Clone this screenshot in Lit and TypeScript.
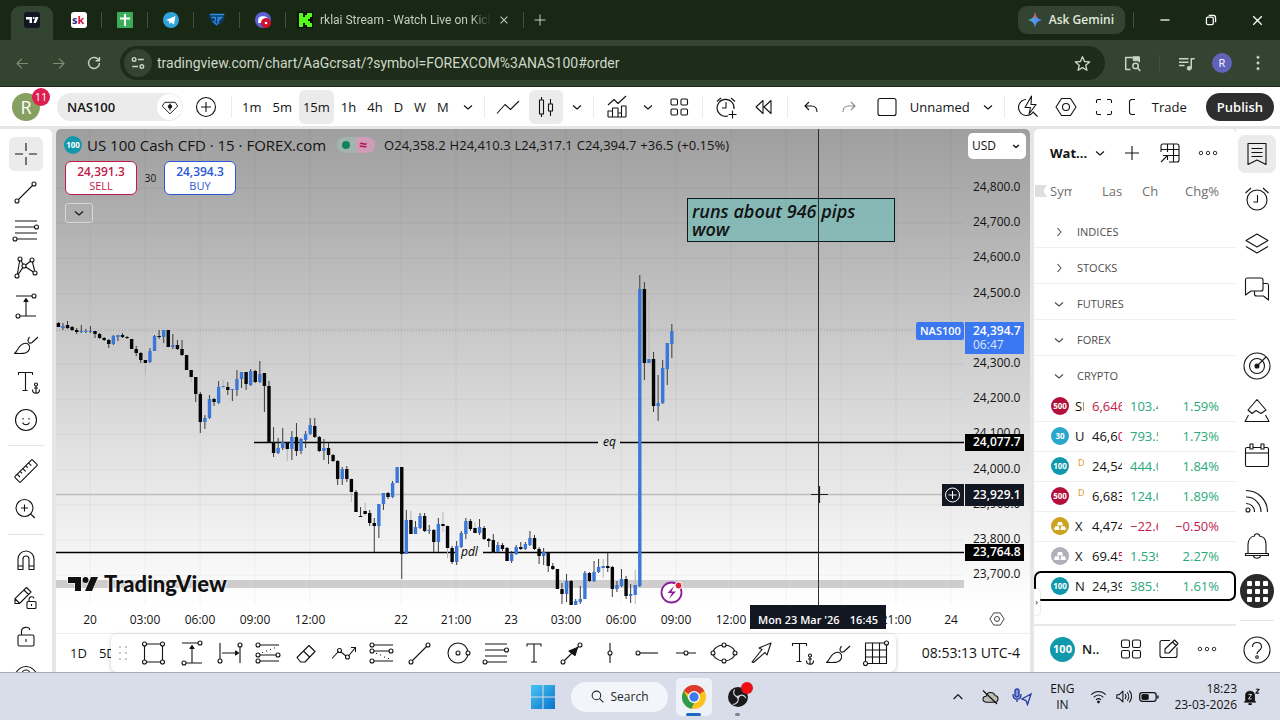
import { LitElement, html, svg, css } from "lit";
import { customElement } from "lit/decorators.js";
import { classMap } from "lit/directives/class-map.js";

/* Line icons, drawn on a 28 x 28 grid with a one-unit stroke. */
const anchor = svg`<circle cx="22" cy="17.500" r="1.500"/><path d="M22 19v7M20 21h4M18.500 22.500c0 5 7 5 7 0"/>`;
const ICONS: Record<string, unknown> = {
  cross: svg`<path d="M14 3v8M14 17v8M3 14h8M17 14h8"/>`,
  trend: svg`<circle cx="5" cy="23" r="2"/><circle cx="22" cy="6" r="2"/><path d="M6.500 21.500l14-14"/>`,
  fib: svg`<path d="M3 5h22M3 11h19.500M3 17h22M5 23h20"/><circle cx="24.500" cy="11" r="2"/><circle cx="3" cy="23" r="2"/>`,
  pattern: svg`<circle cx="8" cy="5" r="2"/><circle cx="20" cy="6" r="2"/><circle cx="5" cy="22" r="2"/><circle cx="23" cy="19" r="2"/><circle cx="12" cy="12" r="2"/><path d="M7.600 7L5.400 20M9 6.800l2.200 3.600M13.500 11l5-3.700M20.400 8l2.300 9M13.800 13l7.500 5M10.800 13.600L6.200 20.400"/>`,
  position: svg`<path d="M4 4h16M8 24h16M14 8v16"/><path d="M12 9.500l2-3 2 3z" fill="currentColor"/><circle cx="22" cy="4" r="2"/><circle cx="6" cy="24" r="2"/>`,
  range: svg`<path d="M4 4v16M24 8v16M6 14h15"/><path d="M19.500 12l3 2-3 2z" fill="currentColor"/><circle cx="4" cy="22" r="2"/><circle cx="24" cy="6" r="2"/>`,
  longpos: svg`<path d="M6 6h19M6 16h16M6 22h19"/><circle cx="4" cy="6" r="2"/><circle cx="4" cy="16" r="2"/><circle cx="24" cy="16" r="2"/><circle cx="4" cy="22" r="2"/><path d="M8 13.500h1M12 12h1M16 10.500h1M20 9h1"/>`,
  shortpos: svg`<path d="M6 6h19M6 12h15M6 22h19"/><circle cx="4" cy="6" r="2"/><circle cx="4" cy="12" r="2"/><circle cx="23" cy="12" r="2"/><circle cx="4" cy="22" r="2"/><path d="M8 14.500h1M12 16h1M16 18h1M20 19.500h1"/>`,
  brush: svg`<path d="M2.500 23.500c6-.5 13 1.500 15-4.500 1-4-2-6.500-5.500-5.500C6.500 15 6.500 20 2.500 23.500z"/><path d="M26 7l-6 5.500c-1.500 1.300-4 .5-4-2 0-1.500 1-2.500 1.500-3.500"/>`,
  textAnchor: svg`<path d="M6.500 7V4.500h14V7M13.500 4.500v18M10.500 22.500h5"/><g transform="translate(2 -1)">${anchor}</g>`,
  text: svg`<path d="M7 7.500V5h14v2.500M14 5v18M11 23h6"/>`,
  smile: svg`<circle cx="14" cy="14" r="10.500"/><path d="M11 12v1.500M17 12v1.500M10.500 16.500c1.500 3 5.500 3 7 0"/>`,
  ruler: svg`<g transform="rotate(-45 14 14)"><rect x="1.500" y="10" width="25" height="8" rx="1"/><path d="M5.500 10v4M9.500 10v3M13.500 10v4M17.500 10v3M21.500 10v4"/></g>`,
  zoom: svg`<circle cx="12.500" cy="13" r="8.500"/><path d="M12.500 9.500v7M9 13h7M18.800 19l4 4"/>`,
  magnet: svg`<path d="M6 23.500V13a8 8 0 0 1 16 0v10.500h-5V13a3 3 0 0 0-6 0v10.500zM6 20h5M17 20h5"/>`,
  pencilLock: svg`<path d="M3 19.500v-4.800L14.500 3.500l4.500 4.500L7.500 19.500zM12 6l4.500 4.500M3.300 15l4 4"/><rect x="15" y="17.500" width="9" height="7" rx="1"/><path d="M17 17.500v-2c0-3.500 4.500-3.500 5-1M19.500 20v2"/>`,
  lock: svg`<rect x="6" y="13" width="16" height="11" rx="1.500"/><path d="M9.500 13V9.500c0-5 7.500-5.500 8.500-1.500M14 17v3"/>`,
  eye: svg`<path d="M3 14c6-10 16-10 22 0-6 10-16 10-22 0z"/><circle cx="14" cy="14" r="4"/>`,
  plusCircle: svg`<circle cx="14" cy="14" r="9.500"/><path d="M14 9v10M9 14h10"/>`,
  plus: svg`<path d="M14 7v14M7 14h14"/>`,
  chevron: svg`<path d="M10 12.500l4 3.500 4-3.500"/>`,
  right: svg`<path d="M12.500 10l3.500 4-3.500 4"/>`,
  up: svg`<path d="M8.500 16.500l5.500-5.500 5.500 5.500" stroke-width="1.600"/>`,
  line: svg`<path d="M3 20.500l8-9 5.500 5L25 8"/>`,
  candles: svg`<rect x="7.500" y="7" width="4" height="14"/><path d="M9.500 4v3M9.500 21v3M18.500 6v5M18.500 18v5"/><rect x="16.500" y="11" width="4" height="7"/>`,
  indicators: svg`<path d="M5 12l6-5.500 4 4 8-7.500M5 24v-6h4.500v6M9.500 24v-9H15v9M15 24v-4h3.500v4M18.500 24V13H23v11M5 24h18"/>`,
  layouts: svg`<rect x="6" y="6" width="6.500" height="6" rx="1.200"/><rect x="16" y="6" width="6.500" height="6" rx="1.200"/><rect x="6" y="16" width="6.500" height="6" rx="1.200"/><rect x="16" y="16" width="6.500" height="6" rx="1.200"/>`,
  panels: svg`<rect x="4.500" y="5" width="8" height="7.500" rx="1.800"/><rect x="15.500" y="5" width="8" height="7.500" rx="1.800"/><rect x="4.500" y="15.500" width="8" height="7.500" rx="1.800"/><rect x="15.500" y="15.500" width="8" height="7.500" rx="1.800"/>`,
  alarmPlus: svg`<path d="M22 16a8.500 8.500 0 1 0-6 7M14 9v6h-4M5 8.500L9 5M19 5l4 3.500M20.500 17.500v8M16.500 21.500h8"/>`,
  rewind: svg`<path d="M13 7.500v13L6 14zM21 7.500v13L14 14z"/>`,
  undo: svg`<path d="M12 9l-4 4 4 4M8 13h6.500c3.500 0 5.500 2.500 5.500 6"/>`,
  redo: svg`<path d="M16 9l4 4-4 4M20 13h-6.500C10 13 8 15.500 8 19"/>`,
  square: svg`<rect x="5" y="5.500" width="18" height="17" rx="2"/>`,
  flash: svg`<path d="M12 6.500a8 8 0 1 0 7.500 12M19.500 19.500l4 4M17.500 3L11 14.500h5.500L15 21l7-9.500h-5z"/>`,
  hex: svg`<path d="M9.500 5.500h9L24 14l-5.500 8.500h-9L4 14z"/><circle cx="14" cy="14" r="3.500"/>`,
  full: svg`<path d="M6.500 10V8c0-1 .5-1.500 1.500-1.500h3M17 6.500h3c1 0 1.500.5 1.500 1.500v2M21.500 18v2c0 1-.5 1.500-1.500 1.500h-3M11 21.500H8c-1 0-1.500-.5-1.500-1.500v-2"/>`,
  bracket: svg`<path d="M10 6.500H7c-1.500 0-2.500 1-2.500 2.500v10c0 1.500 1 2.500 2.500 2.500h3"/>`,
  gem: svg`<path d="M8 8.500h12l3 4.500-9 9-9-9z"/><path d="M14 10v8" /><circle cx="14" cy="13.500" r="2" fill="currentColor"/>`,
  eraser: svg`<path d="M5 18.500L17 6.500l6 6L13 23H8.500zM11.500 12l6 6"/>`,
  wave: svg`<path d="M2 19.500l6.500-7M11 13l5 4M18.500 17l6.500-8M21 8.500h4.500V13"/><circle cx="9.500" cy="11.500" r="2"/><circle cx="17.500" cy="18" r="2"/>`,
  circle: svg`<circle cx="14" cy="14" r="10"/><circle cx="14" cy="14" r="2"/><circle cx="24" cy="14" r="2" fill="#fff"/>`,
  arrowLine: svg`<circle cx="5" cy="23" r="2"/><circle cx="22" cy="6" r="2"/><path d="M6.500 21.500l14-14"/><path d="M19.500 8.500l-2.500 8-6-4.500z" fill="currentColor"/>`,
  vline: svg`<path d="M14 4v8M14 16v8"/><circle cx="14" cy="14" r="2"/>`,
  hray: svg`<path d="M6 14h18"/><circle cx="4" cy="14" r="2"/>`,
  hline: svg`<path d="M4 14h8M16 14h8"/><circle cx="14" cy="14" r="2"/>`,
  ellipse: svg`<ellipse cx="14" cy="14" rx="11" ry="8"/><circle cx="3" cy="14" r="2" fill="#fff"/><circle cx="25" cy="14" r="2" fill="#fff"/><circle cx="14" cy="6" r="2" fill="#fff"/><circle cx="14" cy="22" r="2" fill="#fff"/>`,
  arrow: svg`<path d="M4 23l10-12.500-3-1.500L23 4l-4 12-2-2.500L5.500 23.500z"/>`,
  grid: svg`<rect x="3.500" y="4" width="21" height="20.500"/><path d="M10.500 4v20.500M17.500 4v20.500M3.500 11h21M3.500 18h21"/><circle cx="24.500" cy="4" r="2" fill="#fff"/><circle cx="3.500" cy="24.500" r="2" fill="#fff"/>`,
  rect: svg`<rect x="4.500" y="5" width="18" height="18"/><circle cx="4.500" cy="5" r="2" fill="#fff"/><circle cx="22.500" cy="5" r="2" fill="#fff"/><circle cx="4.500" cy="23" r="2" fill="#fff"/><circle cx="22.500" cy="23" r="2" fill="#fff"/>`,
  table: svg`<path d="M5 13V7c0-1.500.5-2 2-2h14c1.500 0 2 .5 2 2v14c0 1.500-.5 2-2 2h-8M5 10.500h18M12 16.500h11M11.500 5v8M17.500 5v18M5 23l6.500-6.500M7 16.500h4.500V21"/>`,
  dots: svg`<circle cx="5" cy="14" r="2.200"/><circle cx="14" cy="14" r="2.200"/><circle cx="23" cy="14" r="2.200"/>`,
  list: svg`<path d="M5 3.500h18v21l-9-4.500-9 4.500zM8.500 8.500h11M8.500 12.500h11M8.500 16.500h11"/>`,
  alarm: svg`<circle cx="14" cy="15" r="10"/><path d="M14.500 10v7h-4M2.500 8L8 3M20 3l5.500 5"/>`,
  layers: svg`<path d="M14 4l11 6.500L14 17 3 10.500zM3 16.500L14 23l11-6.500"/>`,
  chat: svg`<path d="M4 3h14c1.500 0 2 .5 2 2v9c0 1.500-.5 2-2 2H8l-5.500 4V5c0-1.500.5-2 1.500-2zM20 8.500h4c1.200 0 1.500.5 1.500 2v14.500l-5-4h-7c-1.500 0-2-.5-2-2V16"/>`,
  target: svg`<circle cx="14" cy="14" r="13"/><circle cx="14" cy="14" r="7.500"/><circle cx="14" cy="14" r="2" fill="currentColor"/><path d="M15 13l8-8"/>`,
  peaks: svg`<path d="M14 2.500l9 10.500-5 3.500-5-3-4 3L5 13zM5.500 18L2 24.500h24L22.500 18"/>`,
  calendar: svg`<rect x="2.500" y="5.500" width="23" height="19" rx="1.500"/><path d="M2.500 11h23"/><rect x="7" y="2" width="3" height="5" fill="#fff"/><rect x="18" y="2" width="3" height="5" fill="#fff"/>`,
  feed: svg`<circle cx="5" cy="23" r="2"/><path d="M3 16.500c5 0 8.500 3.500 8.500 8.500M3 10c8.500 0 15 6.500 15 15M3 3.500c12 0 21.500 9.500 21.500 21.500"/>`,
  bell: svg`<path d="M5 21.500v-9c0-5 3-8 6.500-8.500 0-3 5-3 5 0 4 .5 6.500 3.500 6.500 8.500v9M2.500 21.500h23v2h-23zM10.500 24c.5 3 6.500 3 7 0"/>`,
  help: svg`<circle cx="14" cy="14" r="13"/><path d="M9.500 11c0-6 9-6 9 0 0 3.500-4.500 3.500-4.500 7"/><circle cx="14" cy="21" r="1.300"/>`,
  edit: svg`<path d="M15 5.500H7C5.500 5.500 5 6 5 7.500v13c0 1.500.5 2 2 2h13c1.500 0 2-.5 2-2v-8M10 18v-4L19.500 5l3.500 3.500-9 9.500zM17.500 7l3.500 3.500"/>`,
  back: svg`<path d="M23 14H6M13 6l-8 8 8 8" stroke-width="2"/>`,
  forward: svg`<path d="M5 14h17M15 6l8 8-8 8" stroke-width="2"/>`,
  reload: svg`<path d="M22.500 14a8.500 8.500 0 1 1-3-6.500l3 3M22.500 4.500v6h-6" stroke-width="2.200"/>`,
  tune: svg`<g stroke-width="2.200"><circle cx="8" cy="8.500" r="2.800"/><path d="M14 8.500h9M5 19.500h9"/><circle cx="20" cy="19.500" r="2.800"/></g>`,
  star: svg`<path d="M14 4l3 7 7.500.7-5.700 5 1.700 7.300-6.500-4-6.500 4 1.700-7.300-5.700-5L11 11z" stroke-width="2"/>`,
  sidesearch: svg`<path d="M11 23H4V5h20v7" stroke-width="2.200"/><path d="M15 4h9v6h-9z" fill="currentColor"/><circle cx="18.500" cy="17.500" r="4" stroke-width="2.200"/><path d="M21.500 20.500l4 4.500" stroke-width="2.200"/>`,
  queue: svg`<path d="M3 7h14M3 12h14M3 17h8M21 21V7h5" stroke-width="2.200"/><circle cx="18" cy="21" r="3" fill="currentColor"/>`,
  kebab: svg`<g fill="currentColor"><circle cx="14" cy="6" r="1.600"/><circle cx="14" cy="14" r="1.600"/><circle cx="14" cy="22" r="1.600"/></g>`,
  min: svg`<path d="M6 14h16" stroke-width="2.200"/>`,
  restore: svg`<g stroke-width="2.200"><rect x="6" y="9" width="12" height="13" rx="2.500"/><path d="M10 6h8c3 0 4 1.500 4 4v8"/></g>`,
  close: svg`<path d="M6 6l16 16M22 6L6 22" stroke-width="2.400"/>`,
  search: svg`<circle cx="12" cy="12" r="8" stroke-width="2"/><path d="M18 18l7 7" stroke-width="2"/>`,
  cloudOff: svg`<path d="M8 22c-7-1-6-9 0-9 1-8 12-8 14-1 6 0 6 9 0 10z" fill="#bdbdb5" stroke-width="1.600"/><path d="M3 4l22 21" stroke-width="2"/>`,
  wifi: svg`<g stroke-width="1.800"><path d="M2 11c7-7 17-7 24 0M6 15.500c5-5 11-5 16 0M10 19.500c2.500-2.500 5.500-2.500 8 0"/></g><circle cx="14" cy="23" r="1.800" fill="currentColor"/>`,
  volume: svg`<g stroke-width="1.800"><path d="M3 11h4l6-6v18l-6-6H3zM16.500 10c2 2.500 2 5.500 0 8M20 7c3.500 4 3.500 10 0 14M23.500 4.500c5 5.500 5 13.500 0 19"/></g>`,
  battery: svg`<rect x="1" y="8" width="23" height="12" rx="3.500" stroke-width="1.800"/><rect x="4" y="10.500" width="9" height="7" rx="1" fill="currentColor"/><path d="M26.500 12v4" stroke-width="2"/>`,
  notify: svg`<path d="M4 20V11c0-4 3-6 7-6s7 2 7 6v9l2 2H2z" fill="currentColor"/><path d="M8.500 25h5" stroke-width="3"/><path d="M8.500 10h5l-5 7h5" stroke="#d9dde9" stroke-width="1.500"/><path d="M20 2h5l-5 6h5" stroke-width="1.800"/>`,
};

const icon = (name: string, size = 28) => html`<svg
  class="icon" width=${size} height=${size} viewBox="0 0 28 28" fill="none"
  stroke="currentColor" stroke-width="1.100" stroke-linejoin="round" aria-hidden="true">${ICONS[name]}</svg>`;

const iconButton = (name: string, label: string, cls = "ib", size = 28) =>
  html`<button class=${cls} aria-label=${label}>${icon(name, size)}</button>`;

const base = css`
  :host, *, *::before, *::after { box-sizing: border-box; }
  :host { font-family: "Open Sans", "Noto Sans", sans-serif; font-size: 13px; line-height: 18px; color: #131313; }
  button, input, select { font: inherit; color: inherit; border: 0; padding: 0; margin: 0; background: none; }
  button { display: inline-flex; align-items: center; justify-content: center; flex: none; white-space: nowrap; }
  .icon { display: block; flex: none; }
`;

/* ------------------------------------------------------------ browser */

const favicons = [
  svg`<rect width="16" height="16" rx="3" fill="#131722"/><path d="M2 5h6v6H5.500V7.500H2zM11.500 5H14.500L12 11H9.500z" fill="#fff"/><circle cx="9.700" cy="6" r="1" fill="#fff"/>`,
  svg`<rect width="16" height="16" rx="3" fill="#fff"/><text x="1" y="12" font-size="11" font-weight="700" fill="#2b2d8c">s<tspan fill="#d6123c">k</tspan></text>`,
  svg`<rect width="16" height="16" rx="1" fill="#3cab5a"/><path d="M8 2v12M3 6.500h10" stroke="#fff" stroke-width="2"/>`,
  svg`<circle cx="8" cy="8" r="8" fill="#2fa3db"/><path d="M3 8l9.500-4-1.500 8.500-3-2-1.500 1.500-.5-3z" fill="#fff"/>`,
  svg`<path d="M0 2h16c0 5-3 10-8 12C3 12 0 8 0 2z" fill="#0d3a68"/><path d="M1 2.500h14M2.500 5.500h4v4M9 12V5.500h3.500L9 9M4 9l4 4" stroke="#2f8fe0" stroke-width="1.300" fill="none"/>`,
  svg`<circle cx="8" cy="8" r="8" fill="#5b62d6"/><path d="M3.500 6c2-2.500 7-2.500 9 0l1 5H3z" fill="#fff"/><circle cx="11" cy="11" r="5" fill="#d0102b"/><circle cx="11" cy="11" r="1.300" fill="#fff"/>`,
];

@customElement("browser-chrome")
class BrowserChrome extends LitElement {
  static styles = [base, css`
    :host { display: block; color: #dfe8da; background: #192814; }
    .tabs { display: flex; align-items: center; height: 40px; padding-left: 11px; }
    .tab { width: 45px; height: 40px; }
    .tab.active { align-self: flex-end; height: 34px; width: 42px; margin-right: 3px; padding-bottom: 6px; background: #334430; border-radius: 9px 9px 0 0; }
    .tab .icon { width: 16px; height: 16px; }
    .sep { width: 1px; height: 16px; background: #40523b; flex: none; }
    .tab.live { width: 237px; gap: 7px; justify-content: flex-start; padding: 0 13px 0 11px; color: #c3cfbd; font-family: Roboto, "Open Sans", sans-serif; font-size: 12px; }
    .tab.live .x .icon { width: 12px; height: 12px; }
    .label { flex: 1; overflow: hidden; text-align: left; mask-image: linear-gradient(90deg, #000 88%, transparent); }
    .new { width: 32px; }
    .gemini { margin-left: auto; height: 28px; padding: 0 11px 0 9px; gap: 6px; border-radius: 9px; background: #334430; font-weight: 600; font-size: 12px; color: #e2e9de; }
    .win { width: 46px; height: 40px; color: #fff; }
    .bar { display: flex; align-items: center; height: 47px; padding: 0 4px 0 4px; background: #334430; border-bottom: 1px solid #1c2a18; color: #c9d6c3; }
    .nav { width: 36px; height: 32px; }
    .nav.dim { color: #7b8c74; }
    .omni { flex: 1; display: flex; align-items: center; height: 34px; margin: 0 9px 0 8px; border-radius: 17px; background: #1e2c1a; }
    .tune { width: 28px; height: 28px; margin-left: 4px; border-radius: 50%; background: #334430; }
    .url { flex: 1; min-width: 0; margin-left: 5px; font-family: Roboto, "Open Sans", sans-serif; font-size: 14px; color: #cdd8c8; outline: 0; }
    .star { width: 28px; height: 28px; margin-right: 9px; }
    .tool { width: 36px; height: 32px; }
    .first { margin-right: 9px; }
    .second { margin-left: 8px; }
    .who { width: 20px; height: 20px; margin: 0 8px; border-radius: 50%; background: #6163bb; color: #fff; font-size: 11px; }
    .gap { margin: 0 8px; }
  `];
  render() {
    const names = ["TradingView", "SK", "Sheets", "Telegram", "Prop", "Discord"];
    return html`
      <div class="tabs">
        ${favicons.map((f, i) => html`
          <button class=${classMap({ tab: true, active: i === 0 })} aria-label=${names[i]}>
            <svg class="icon" viewBox="0 0 16 16">${f}</svg></button>
          ${i ? html`<span class="sep"></span>` : ""}`)}
        <button class="tab live">
          <svg class="icon" viewBox="0 0 16 16"><rect width="16" height="16" fill="#0b0f0a"/><path d="M2 1h4v4h2V3h2V1h5v4h-2v2h-2v2h2v2h2v4h-5v-2H8v-2H6v4H2z" fill="#53fc18"/></svg>
          <span class="label">rklai Stream - Watch Live on Kick</span><span class="x">${icon("close", 12)}</span>
        </button>
        <span class="sep"></span>
        ${iconButton("plus", "New tab", "new", 22)}
        <button class="gemini"><svg class="icon" width="16" height="16" viewBox="0 0 16 16">
          <defs><linearGradient id="gem" x1="0" y1="0" x2="1" y2="0"><stop stop-color="#4fc26a"/><stop offset=".35" stop-color="#4fa0e8"/><stop offset="1" stop-color="#4b7cf0"/></linearGradient></defs>
          <path d="M8 0c.6 5 3 7.400 8 8-5 .6-7.400 3-8 8-.6-5-3-7.400-8-8 5-.6 7.400-3 8-8z" fill="url(#gem)"/><path d="M8 0c.3 2.500 1 4.300 2.200 5.500H5.800C7 4.300 7.700 2.500 8 0z" fill="#e2574c"/></svg>Ask Gemini</button>
        <span class="sep gap"></span>
        ${iconButton("min", "Minimise", "win", 16)}${iconButton("restore", "Restore", "win", 16)}${iconButton("close", "Close", "win", 15)}
      </div>
      <div class="bar">
        ${iconButton("back", "Back", "nav dim", 17)}${iconButton("forward", "Forward", "nav dim", 17)}${iconButton("reload", "Reload", "nav", 18)}
        <div class="omni">
          ${iconButton("tune", "Site information", "tune", 18)}
          <input class="url" aria-label="Address" value="tradingview.com/chart/AaGcrsat/?symbol=FOREXCOM%3ANAS100#order">
          ${iconButton("star", "Bookmark", "star", 19)}
        </div>
        ${iconButton("sidesearch", "Search tabs", "tool first", 19)}
        <span class="sep"></span>
        ${iconButton("queue", "Media", "tool second", 19)}
        <button class="who" aria-label="Profile">R</button>
        ${iconButton("kebab", "Menu", "tool", 20)}
      </div>`;
  }
}

/* ------------------------------------------------------------ toolbars */

@customElement("top-toolbar")
class TopToolbar extends LitElement {
  static styles = [base, css`
    :host { display: flex; align-items: center; gap: 4px; height: 39px; padding: 0 6px 0 12px; background: #fff; overflow: hidden; }
    .avatar { position: relative; width: 28px; height: 28px; margin-right: 13px; border-radius: 50%; background: #86a061; color: #fff; font-size: 18px; }
    .badge { position: absolute; left: 20px; top: -5px; width: 18px; height: 18px; border-radius: 50%; background: #dc1e50; font-size: 11px; line-height: 18px; }
    .symbol { width: 126px; height: 28px; padding: 0 1px 0 10px; justify-content: space-between; border-radius: 14px; background: #ebebeb; font-weight: 600; }
    .gem { display: flex; align-items: center; justify-content: center; width: 25px; height: 26px; border-radius: 13px; background: #fff; }
    .add { width: 38px; height: 34px; }
    .sep { width: 1px; height: 22px; margin: 0 2px; background: #ebebeb; flex: none; }
    .times { display: flex; gap: 3px; margin-right: 1px; }
    .time { height: 34px; padding: 0 4px; border-radius: 6px; }
    .on { background: #ebebeb; border-radius: 6px; }
    .ib { width: 34px; height: 34px; }
    .cv { width: 20px; height: 34px; }
    .dim { color: #8a8a8a; }
    .cut { width: 11px; overflow: hidden; justify-content: flex-start; }
    .name { padding: 0 4px 0 2px; }
    .trade { height: 28px; padding: 0 11px; border-radius: 14px; font-weight: 500; margin-left: auto; }
    .publish { height: 28px; padding: 0 11px; border-radius: 14px; background: #2e2e2e; color: #fff; font-weight: 600; margin-left: 4px; }
  `];
  render() {
    const sep = html`<span class="sep"></span>`;
    const cv = (l: string) => iconButton("chevron", l, "cv", 28);
    return html`
      <button class="avatar" aria-label="Account">R<span class="badge">11</span></button>
      <button class="symbol">NAS100<span class="gem">${icon("gem", 24)}</span></button>
      ${iconButton("plusCircle", "Compare", "add")}${sep}
      <div class="times">${["1m", "5m", "15m", "1h", "4h", "D", "W", "M"].map((t) =>
        html`<button class=${classMap({ time: true, on: t === "15m" })}>${t}</button>`)}</div>
      ${cv("Intervals")}${sep}
      ${iconButton("line", "Line")}${iconButton("candles", "Candles", "ib on")}${cv("Chart types")}${sep}
      ${iconButton("indicators", "Indicators")}${cv("Favourite indicators")}${iconButton("layouts", "Templates")}${sep}
      ${iconButton("alarmPlus", "Create alert")}${iconButton("rewind", "Replay")}${sep}
      ${iconButton("undo", "Undo")}${iconButton("redo", "Redo", "ib dim")}${iconButton("square", "Layout")}
      <button class="name">Unnamed</button>${cv("Manage layouts")}${sep}
      ${iconButton("flash", "Quick search")}${iconButton("hex", "Settings")}${iconButton("full", "Fullscreen")}
      ${iconButton("bracket", "Snapshot", "cut")}
      <button class="trade">Trade</button><button class="publish">Publish</button>`;
  }
}

@customElement("draw-toolbar")
class DrawToolbar extends LitElement {
  static styles = [base, css`
    :host { display: flex; flex-direction: column; align-items: center; gap: 4px; width: 52px; padding-top: 8px; background: #fff; border-radius: 0 5px 0 0; overflow: hidden; }
    .ib { width: 34px; height: 34px; }
    .on { background: #ebebeb; border-radius: 6px; }
    .sep { width: 36px; height: 1px; margin: 4px 0; background: #e4e4e4; flex: none; }
  `];
  render() {
    return ["cross", "trend", "fib", "pattern", "position", "brush", "textAnchor", "smile", "-", "ruler", "zoom", "-", "magnet", "pencilLock", "lock", "eye"]
      .map((n) => n === "-" ? html`<span class="sep"></span>` : iconButton(n, n, n === "cross" ? "ib on" : "ib"));
  }
}

@customElement("side-rail")
class SideRail extends LitElement {
  static styles = [base, css`
    :host { display: flex; flex-direction: column; align-items: center; gap: 7px; width: 44px; padding: 6px 2px 4px 0; background: #fff; overflow: hidden; }
    .ib { width: 38px; height: 38px; }
    .on { background: #ebebeb; border-radius: 7px; }
    .space { margin-top: 32px; }
    .apps { width: 38px; height: 38px; }
    .disc { display: grid; grid-template-columns: repeat(3, 5px); gap: 3px; place-content: center; width: 34px; height: 34px; border-radius: 50%; background: #2a2a2a; }
    .cell { height: 5px; border-radius: 1px; background: #fff; }
    .help { margin-top: auto; padding-top: 10px; border-top: 1px solid #e4e4e4; height: 48px; width: 34px; }
  `];
  render() {
    return html`
      ${iconButton("list", "Watchlist", "ib on")}${iconButton("alarm", "Alerts")}${iconButton("layers", "Object tree")}${iconButton("chat", "Chats")}
      ${iconButton("target", "Screeners", "ib space")}${iconButton("peaks", "Pine")}${iconButton("calendar", "Calendar")}${iconButton("feed", "News")}${iconButton("bell", "Notifications")}
      <button class="apps" aria-label="Products"><span class="disc">${Array.from({ length: 9 }, () => html`<span class="cell"></span>`)}</span></button>
      ${iconButton("help", "Help", "help")}`;
  }
}

/* ------------------------------------------------------------ chart */

/* high, body top, body bottom, low, direction (1 = up), one entry per bar */
const BARS: number[][] = [
  [193,194,198,198,0],[194,197,199,201,1],[192,196,199,200,0],[197,198,201,202,0],[199,201,203,205,0],[196,202,203,204,1],[200,202,203,204,1],[197,202,203,204,1],
  [202,202,205,209,0],[204,205,209,210,0],[208,209,211,212,0],[210,211,215,219,0],[206,207,215,216,1],[206,206,208,212,1],[204,206,208,209,0],[207,208,209,210,0],
  [210,210,220,220,0],[217,220,224,227,0],[223,224,231,234,0],[230,231,234,246,0],[219,222,233,234,1],[206,207,222,222,1],[201,207,208,210,0],[201,201,208,214,1],
  [201,201,218,218,0],[205,216,218,220,1],[211,216,220,221,0],[211,220,226,227,0],[226,226,241,241,0],[241,241,248,253,0],[248,248,265,273,0],[263,265,293,304,0],
  [286,289,293,300,1],[266,270,289,290,1],[269,270,273,277,0],[252,258,274,275,1],[251,257,258,260,1],[253,258,261,266,0],[260,260,261,272,1],[241,250,261,267,1],
  [243,243,250,259,1],[243,243,255,261,0],[240,242,256,257,1],[241,242,253,254,0],[232,245,253,254,1],[244,244,257,283,0],[252,257,314,314,0],[298,314,324,328,0],
  [309,319,324,325,1],[299,313,319,321,1],[312,313,320,332,0],[302,308,320,331,1],[294,308,322,327,0],[309,310,322,325,1],[302,305,311,319,1],[289,296,305,306,1],
  [289,297,308,309,0],[307,308,322,323,0],[310,319,322,331,1],[314,319,326,335,0],[325,326,332,333,0],[331,332,350,356,0],[338,340,350,356,1],[337,340,350,353,0],
  [349,350,363,373,0],[361,363,383,383,0],[378,387,388,388,0],[374,382,385,387,0],[381,384,394,397,0],[389,394,397,423,0],[375,375,397,409,1],[364,364,375,381,1],
  [363,364,368,370,0],[352,354,368,369,1],[338,338,354,354,1],[338,338,425,450,0],[381,391,425,425,1],[382,391,405,405,0],[392,398,405,405,1],[384,387,399,400,1],
  [384,387,402,403,0],[396,401,402,405,1],[400,401,413,423,0],[389,395,413,423,1],[383,395,397,403,0],[396,397,419,429,0],[417,419,433,435,0],[412,417,433,436,1],
  [402,404,418,419,1],[389,392,405,410,1],[390,392,400,402,0],[393,399,404,404,0],[390,398,404,406,1],[397,399,410,411,0],[409,410,412,418,0],[405,411,423,424,0],
  [413,416,423,424,1],[414,416,420,422,0],[418,419,432,432,0],[422,425,432,434,1],[416,418,425,426,1],[413,418,420,421,0],[413,415,420,421,1],[402,409,416,417,1],
  [406,409,420,421,0],[418,420,427,435,0],[419,423,427,436,1],[423,423,437,443,0],[434,437,440,441,0],[440,440,460,460,0],[454,460,465,475,0],[445,452,465,473,1],
  [451,452,476,476,0],[470,472,476,476,1],[457,470,473,475,1],[442,444,470,470,1],[443,444,452,453,0],[432,443,452,453,1],[430,438,443,444,1],[430,437,439,449,1],
  [424,437,439,443,0],[437,438,460,468,0],[452,456,460,463,1],[440,450,457,458,1],[447,450,467,470,0],[455,465,467,474,1],[441,456,466,475,1],[146,160,457,458,1],
  [153,160,234,251,0],[170,230,234,234,1],[223,230,277,283,0],[246,274,277,292,1],[231,239,274,275,1],[214,214,240,256,1],[195,202,215,229,1],
];
const STEP = 4.578;
const barX = (i: number) => 2.4 + i * STEP;
/* Wicks that the chart paints as a pale grey line. */
const PALE = new Set([19, 29, 36, 50, 64, 67, 77, 84, 85, 91, 119, 126, 129]);
const PRICES = Array.from({ length: 12 }, (_, i) => 24800 - i * 100);
const priceY = (p: number) => 59 + (24800 - p) * 0.352;
const TIMES: [number, string][] = [[34, "20"], [89, "03:00"], [144, "06:00"], [199, "09:00"], [254, "12:00"], [345, "22"], [400, "21:00"], [455, "23"],
  [510, "03:00"], [565, "06:00"], [620, "09:00"], [675, "12:00"], [730, ""], [785, ""], [840, "21:00"], [895, "24"]];
const money = (p: number) => p.toLocaleString("en-US", { minimumFractionDigits: 1 });

@customElement("price-chart")
class PriceChart extends LitElement {
  static styles = [base, css`
    :host { display: flex; flex-direction: column; min-width: 0; background: #fff; border-radius: 5px 5px 0 0; overflow: hidden; }
    .stage { position: relative; flex: 1; min-height: 0; display: flex; background: linear-gradient(#9f9f9f 0, #b0b0b0 90px, #d2d2d2 246px, #f2f2f2 410px, #fff 477px); }
    .plot { flex: 1; min-width: 0; height: 100%; display: block; }
    .axis { width: 66px; height: 100%; display: block; flex: none; overflow: visible; }
    .up { fill: #3b77d8; } .down { fill: #060606; }
    .wick { stroke: #3a3a3a; stroke-width: 1; }
    .pale { stroke: #b4b4b4; }
    .grid { stroke: #000; stroke-opacity: .04; }
    .num { font-size: 12px; fill: #131313; }
    .strong { font-weight: 600; fill: #fff; }
    .tag { font-size: 11px; }
    .count { fill: #dbe6fd; }
    .mark { font-size: 12px; font-style: italic; fill: #000; font-weight: 500; }
    .legend { position: absolute; left: 8px; top: 5px; display: flex; flex-direction: column; align-items: flex-start; }
    .row { display: flex; align-items: center; height: 22px; }
    .coin { display: inline-flex; align-items: center; justify-content: center; width: 18px; height: 18px; border-radius: 50%; background: #1298ab; color: #fff; font-size: 8px; font-weight: 700; }
    .title { margin: 0 11px 0 5px; font-size: 15px; font-weight: 400; }
    .state { display: flex; align-items: center; width: 38px; height: 16px; margin-right: 9px; border-radius: 8px; background: linear-gradient(90deg, #a0b5ab 50%, #cf9db5 50%); }
    .live { width: 8px; height: 8px; margin-left: 5px; border-radius: 50%; background: #12835c; }
    .approx { margin-left: 9px; color: #b5125e; font-weight: 700; font-size: 14px; line-height: 14px; }
    .ohlc { display: flex; gap: 4px; }
    .deal { display: flex; align-items: center; margin-top: 5px; padding: 0 4px 0 1px; }
    .order { flex-direction: column; width: 72px; height: 34px; border: 1px solid; border-radius: 6px; background: #fff; font-size: 11px; line-height: 13px; }
    .order b { font-size: 12px; font-weight: 600; line-height: 15px; }
    .sell { color: #c01a48; } .buy { color: #2b56d6; }
    .spread { width: 27px; text-align: center; font-size: 10px; }
    .fold { width: 28px; height: 20px; margin: 8px 0 0 1px; border: 1px solid #d8d8d8; border-radius: 3px; }
    .currency { position: absolute; right: 4px; top: 4px; display: flex; align-items: center; height: 26px; width: 58px; border-radius: 5px; background: #fff; }
    .currency select { appearance: none; flex: 1; width: 58px; padding-left: 4px; font-size: 12px; outline: 0; }
    .currency .icon { margin-left: -18px; stroke-width: 2; pointer-events: none; }
    .note { position: absolute; left: 631px; top: 69px; width: 208px; height: 44px; padding: 3px 4px; border: 1px solid #0b1a1a; background: rgba(112, 190, 186, .65); font-size: 18px; line-height: 18px; font-weight: 600; font-style: italic; }
    .hair { position: absolute; left: 762px; top: 0; bottom: 0; width: 1px; background: #2d2d2d; }
    .brand { position: absolute; left: 11px; top: 442px; display: flex; align-items: center; gap: 5px; font-family: Lato, sans-serif; font-weight: 900; font-size: 22px; line-height: 26px; color: #111; text-shadow: 0 0 2px #fff, 0 0 2px #fff, 0 0 2px #fff; }
    .times { position: relative; display: flex; height: 28px; }
    .times .plot { overflow: visible; }
    .stamp { position: absolute; left: 694px; top: 0; height: 24px; width: 136px; background: #131722; color: #fff; font-size: 11px; font-weight: 600; line-height: 29px; display: flex; justify-content: space-between; padding: 0 8px; }
    .gear { width: 66px; height: 28px; }
    .foot { display: flex; align-items: center; height: 39px; border-top: 1px solid #ececec; padding-right: 10px; }
    .spans { display: flex; gap: 12px; width: 55px; padding-left: 14px; overflow: hidden; flex: none; }
    .dock { display: flex; align-items: center; height: 38px; padding: 0 1px 0 8px; border-radius: 6px; background: #fff; box-shadow: 0 1px 4px rgba(0, 0, 0, .22); flex: none; }
    .grip { display: grid; grid-template-columns: repeat(2, 2px); gap: 4px; padding-right: 8px; }
    .grip i { width: 2px; height: 2px; background: #b5b5b5; border-radius: 1px; }
    .ib { width: 38px; height: 36px; }
    .clock { margin-left: auto; white-space: nowrap; font-size: 14px; }
  `];
  render() {
    const pill = (p: number) => svg`<rect x="1" y=${Math.round(priceY(p) - 8.4)} width="59" height="17"/><text class="num strong" x="9" y=${Math.round(priceY(p) + 4)}>${money(p)}</text>`;
    return html`
      <div class="stage">
        <svg class="plot">
          ${PRICES.map((p) => svg`<line class="grid" x2="100%" y1=${priceY(p)} y2=${priceY(p)}/>`)}
          ${TIMES.map(([x]) => svg`<line class="grid" x1=${x} x2=${x} y2="100%"/>`)}
          <rect y="451" width="100%" height="8" fill="#9a9696" fill-opacity=".46"/>
          <line x2="100%" y1="201.500" y2="201.500" stroke="#8c8c8c" stroke-opacity=".6" stroke-dasharray="1 2"/>
          <line x2="100%" y1="365.500" y2="365.500" stroke="#bdbdbd" stroke-width="1.500"/>
          <path d="M0 423.500H401M427 423.500H2000M198 313.500H542M564 313.500H2000" stroke="#000" stroke-width="1.600"/>
          <text class="mark" x="405" y="427">pdl</text><text class="mark" x="547" y="317">eq</text>
          ${BARS.map(([h, t, b, l, up], i) => svg`
            <line class=${PALE.has(i) ? "wick pale" : "wick"} x1=${barX(i)} x2=${barX(i)} y1=${h} y2=${l}/>
            <rect class=${up ? "up" : "down"} x=${barX(i) - 1.7} y=${t} width="3.400" height=${b - t}/>`)}
          <g stroke="#8a1f9c" fill="#fff"><circle cx="615.500" cy="463.500" r="10" stroke-width="1.800"/><path d="M618 457l-6.500 7h4.500l-3 6 7-7.500h-4.500z" fill="#8a1f9c" stroke="none"/><circle cx="622.500" cy="456.500" r="3.500" fill="#d8243c" stroke="#fff"/></g>
          <path d="M763.500 357v17M755 365.500h17" stroke="#222" stroke-width="1.200"/>
        </svg>
        <svg class="axis">
          ${PRICES.map((p) => svg`<text class="num" x="9" y=${Math.round(priceY(p)) + 3}>${money(p)}</text>`)}
          ${pill(24077.7)}${pill(23764.8)}
          <g fill="#131722"><rect x="1" y="355" width="59" height="22"/><rect x="-22" y="355" width="22" height="22"/></g>
          <text class="num strong" x="9" y="370">23,929.1</text>
          <g stroke="#fff" fill="none"><circle cx="-11.500" cy="366" r="7"/><path d="M-11.500 362v8M-15.500 366h8"/></g>
          <g fill="#3b77f0"><rect x="1" y="193" width="59" height="32"/><rect x="-48" y="193" width="48" height="18" rx="2"/></g>
          <text class="num strong tag" x="-44" y="206">NAS100</text><text class="num strong" x="9" y="206">24,394.7</text>
          <text class="num count" x="9" y="220">06:47</text>
        </svg>
        <div class="note">runs about 946 pips wow</div>
        <div class="hair"></div>
        <div class="legend">
          <div class="row"><span class="coin">100</span><h1 class="title">US 100 Cash CFD · 15 · FOREX.com</h1>
            <span class="state"><span class="live"></span><span class="approx">≈</span></span>
            <span class="ohlc"><span>O24,358.2</span><span>H24,410.3</span><span>L24,317.1</span><span>C24,394.7</span><span>+36.5</span><span>(+0.15%)</span></span></div>
          <div class="deal"><button class="order sell"><b>24,391.3</b>SELL</button><span class="spread">30</span><button class="order buy"><b>24,394.3</b>BUY</button></div>
          ${iconButton("chevron", "Collapse legend", "fold", 28)}
        </div>
        <label class="currency"><select aria-label="Currency"><option>USD</option></select>${icon("chevron", 20)}</label>
        <div class="brand"><svg class="icon" width="32" height="18" viewBox="0 0 32 18" fill="#111" stroke="#fff" stroke-width="1" paint-order="stroke"><path d="M1 2h13v14H8V8H1zM24 2h7l-6 14h-7z"/><circle cx="18.500" cy="5" r="3"/></svg>TradingView</div>
      </div>
      <div class="times">
        <svg class="plot">${TIMES.map(([x, t]) => svg`<text class="num" x=${x} y="19" text-anchor="middle">${t}</text>`)}</svg>
        ${iconButton("hex", "Axis settings", "gear", 20)}
        <div class="stamp"><span>Mon 23 Mar '26</span><span>16:45</span></div>
      </div>
      <div class="foot">
        <div class="spans"><button>1D</button><button>5D</button></div>
        <div class="dock"><span class="grip">${Array.from({ length: 6 }, () => html`<i></i>`)}</span>
          ${["rect", "position", "range", "longpos", "eraser", "wave", "shortpos", "trend", "circle", "fib", "text", "arrowLine", "vline", "hray", "hline", "ellipse", "arrow", "textAnchor", "brush", "grid"].map((n) => iconButton(n, n))}
        </div>
        <span class="clock">08:53:13 UTC-4</span>
      </div>`;
  }
}

/* ------------------------------------------------------------ watchlist */

interface Quote { badge: string; color: string; sym: string; last: string; chg: string; pct: string; down?: boolean; tick?: "all" | "end"; delayed?: boolean; on?: boolean; }
const QUOTES: Quote[] = [
  { badge: "500", color: "#b30f3a", sym: "SPX", last: "6,646", chg: "103.4", pct: "1.59%", tick: "all" },
  { badge: "30", color: "#29a7cd", sym: "U", last: "46,60", chg: "793.5", pct: "1.73%", tick: "end" },
  { badge: "100", color: "#1298ab", sym: "", last: "24,54", chg: "444.0", pct: "1.84%", delayed: true },
  { badge: "500", color: "#b30f3a", sym: "", last: "6,683", chg: "124.0", pct: "1.89%", delayed: true },
  { badge: "", color: "#cca21f", sym: "X", last: "4,474", chg: "−22.6", pct: "−0.50%", down: true },
  { badge: "", color: "#b0b0b8", sym: "X", last: "69.45", chg: "1.539", pct: "2.27%", tick: "end" },
  { badge: "100", color: "#1298ab", sym: "N", last: "24,39", chg: "385.9", pct: "1.61%", on: true },
];

@customElement("watch-list")
class WatchList extends LitElement {
  static styles = [base, css`
    :host { display: flex; flex-direction: column; position: relative; width: 202px; background: #fff; border-radius: 5px 5px 0 0; overflow: hidden; }
    .head { display: flex; align-items: center; height: 48px; padding-left: 16px; flex: none; }
    .title { font-weight: 700; }
    .ib { width: 38px; height: 34px; } .cv { width: 26px; height: 34px; }
    table { width: 100%; border-collapse: collapse; table-layout: fixed; }
    .c1 { width: 50px; } .c2 { width: 38px; } .c3 { width: 37px; }
    th, td { padding: 0; font-weight: 400; text-align: left; }
    thead th { height: 34px; padding-bottom: 6px; color: #707070; }
    .clip { display: block; overflow: hidden; white-space: nowrap; margin-left: 8px; width: 30px; }
    .chg { width: 28px; }
    .h1 { margin-left: 16px; width: 22px; }
    .h2 { margin-left: 18px; width: 20px; } .h3 { margin-left: 20px; width: 16px; }
    .pct, thead .pct { text-align: right; padding-right: 17px; }
    .group th { height: 36px; padding-top: 6px; border-bottom: 1px solid #efefef; font-size: 11px; color: #4d4d4d; }
    .group.end th { border: 0; }
    .toggle { display: flex; height: 18px; gap: 4px; margin-left: 11px; }
    .quote td { height: 30px; border-bottom: 1px solid #f0f0f0; color: #29a87a; }
    .quote.down td { color: #c41a4b; }
    .quote td.last, .quote td.sym { color: #131313; }
    .quote td.last.all, .tick { color: #c41a4b; }
    .quote.on { outline: 2px solid #000; outline-offset: -2px; border-radius: 7px; }
    .quote.on td { border: 0; }
    .name { display: flex; align-items: center; gap: 6px; margin-left: 17px; overflow: hidden; }
    .coin { display: inline-flex; flex: none; align-items: center; justify-content: center; width: 18px; height: 18px; border-radius: 50%; background: var(--coin, #1298ab); color: #fff; font-size: 8px; font-weight: 700; }
    .d { color: #e09321; font-size: 9px; line-height: 9px; padding: 0 0 8px 3px; }
    .foot { display: flex; align-items: center; margin-top: auto; height: 48px; padding-left: 16px; border-top: 2px solid #e8e8e8; flex: none; }
    .foot .coin { width: 25px; height: 25px; font-size: 11px; margin-right: 7px; }
    .nm { width: 30px; font-weight: 600; }
    .handle { position: absolute; left: -1px; bottom: 57px; width: 7px; height: 26px; background: #fff; border-radius: 0 4px 4px 0; box-shadow: 0 0 2px #bbb; font-size: 9px; }
    .flag { position: absolute; left: 1px; top: 56px; width: 12px; height: 12px; background: #dedede; clip-path: polygon(0 0, 100% 0, 70% 50%, 100% 100%, 0 100%); }
  `];
  render() {
    const group = (n: string, open: boolean) => html`<tr class=${classMap({ group: true, end: n === "CRYPTO" })}><th colspan="4"><button class="toggle">${icon(open ? "chevron" : "right", 28)}${n}</button></th></tr>`;
    return html`
      <div class="head"><span class="title">Wat...</span>${iconButton("chevron", "Lists", "cv")}${iconButton("plus", "Add symbol")}${iconButton("table", "Table view")}${iconButton("dots", "More", "ib", 22)}</div>
      <span class="flag"></span>
      <table>
        <colgroup><col class="c1"><col class="c2"><col class="c3"><col></colgroup>
        <thead><tr><th><span class="clip h1">Sym</span></th><th><span class="clip h2">Las</span></th><th><span class="clip h3">Ch</span></th><th class="pct">Chg%</th></tr></thead>
        <tbody>
          ${group("INDICES", false)}${group("STOCKS", false)}${group("FUTURES", true)}${group("FOREX", true)}${group("CRYPTO", true)}
          ${QUOTES.map((q) => html`<tr class=${classMap({ quote: true, down: !!q.down, on: !!q.on })}>
            <td class="sym"><span class="name"><span class="coin" style="--coin:${q.color}">${q.badge || html`<svg width="12" height="8" viewBox="0 0 12 8" fill="#fff"><path d="M4 0h4l1 3.500H3zM1 4.300h4L5.500 8H0zM7 4.300h4L12 8H6.500z"/></svg>`}</span>
              ${q.delayed ? html`<span class="d">D</span>` : html`<span>${q.sym}</span>`}</span></td>
            <td class=${classMap({ last: true, all: q.tick === "all" })}><span class="clip">${q.tick === "end" ? html`${q.last.slice(0, -1)}<span class="tick">${q.last.slice(-1)}</span>` : q.last}</span></td>
            <td><span class="clip chg">${q.chg}</span></td><td class="pct">${q.pct}</td></tr>`)}
        </tbody>
      </table>
      <button class="handle" aria-label="Hide panel">›</button>
      <div class="foot"><span class="coin">100</span><span class="nm">N..</span>${iconButton("panels", "Details")}${iconButton("edit", "Notes")}${iconButton("dots", "More", "ib", 22)}</div>`;
  }
}

/* ------------------------------------------------------------ taskbar */

@customElement("task-bar")
class TaskBar extends LitElement {
  static styles = [base, css`
    :host { display: grid; grid-template-columns: 1fr auto 1fr; align-items: center; height: 48px; border-top: 1px solid #a9acb8; background: #d9dde9; font-size: 12px; }
    .apps { grid-column: 2; display: flex; align-items: center; height: 100%; }
    .app { position: relative; width: 36px; height: 38px; border-radius: 5px; }
    .on { background: #eef1f8; }
    .app::after { content: ""; position: absolute; bottom: 0; width: 5px; height: 3px; border-radius: 2px; background: #7f828c; }
    .app.on::after { width: 15px; background: #1b69c5; }
    .app.start::after { content: none; }
    .search { width: 97px; height: 30px; margin: 0 8px 0 10px; gap: 6px; border-radius: 15px; background: #f3f5fb; color: #252525; }
    .obs { margin-left: 8px; }
    .dot { position: absolute; right: 3px; top: 4px; width: 12px; height: 12px; border-radius: 50%; background: #ee0f16; }
    .tray { display: flex; align-items: center; justify-content: flex-end; padding-right: 19px; }
    .t { width: 32px; height: 32px; }
    .s { width: 25px; height: 32px; }
    .two { flex-direction: column; line-height: 16px; }
    .lang { width: 48px; }
    .when { align-items: flex-end; margin: 0 6px 0 13px; }
    .n { width: 18px; }
  `];
  render() {
    return html`
      <div class="apps">
        <button class="app start" aria-label="Start"><svg width="24" height="24" viewBox="0 0 24 24"><defs><linearGradient id="w" x2="1" y2="1"><stop stop-color="#46c6f2"/><stop offset="1" stop-color="#0d72cc"/></linearGradient></defs><path d="M0 0h11.500v11.500H0zM12.500 0H24v11.500H12.500zM0 12.500h11.500V24H0zM12.500 12.500H24V24H12.500z" fill="url(#w)"/></svg></button>
        <button class="search">${icon("search", 15)}Search</button>
        <button class="app on" aria-label="Chrome"><svg width="24" height="24" viewBox="0 0 24 24"><circle cx="12" cy="12" r="12" fill="#fcc31e"/><path d="M12 12L1.600 6A12 12 0 0 1 22.400 6z" fill="#dd3b2f"/><path d="M1.600 6L7 15l5 3-2.500 5.800A12 12 0 0 1 1.600 6z" fill="#2c9b4b"/><circle cx="12" cy="12" r="6" fill="#fff"/><circle cx="12" cy="12" r="4.700" fill="#3b7de8"/></svg></button>
        <button class="app obs" aria-label="OBS"><svg width="20" height="20" viewBox="0 0 20 20"><circle cx="10" cy="10" r="10" fill="#1a1a1c"/><g fill="none" stroke="#d6d6da" stroke-width="1.200"><path d="M10 10c-4-1-5.500-4-3.500-7.500M10 10c3-3 6-2.500 8 1M10 10c1 4-1 7-5 7.500"/></g><circle cx="10" cy="10" r="1.500" fill="#d6d6da"/></svg><span class="dot"></span></button>
      </div>
      <div class="tray">
        ${iconButton("up", "Hidden icons", "t", 22)}${iconButton("cloudOff", "OneDrive", "t", 18)}
        <button class="t" aria-label="Microphone"><svg width="22" height="18" viewBox="0 0 22 18" fill="none" stroke="#2b3fa8" stroke-width="1.400"><rect x="4" y="1" width="4" height="8" rx="2" fill="#8793d8"/><path d="M2 6c0 7 8 7 8 0M6 11.500V14M20 6l-9 5 4 1.500 1.500 4z"/></svg></button>
        <button class="two lang"><span>ENG</span><span>IN</span></button>
        ${iconButton("wifi", "Network", "s", 17)}${iconButton("volume", "Volume", "s", 17)}${iconButton("battery", "Battery", "s", 20)}
        <button class="two when"><span>18:23</span><span>23-03-2026</span></button>
        ${iconButton("notify", "Notifications", "n", 18)}
      </div>`;
  }
}

@customElement("app-root")
class AppRoot extends LitElement {
  static styles = css`
    :host { display: flex; flex-direction: column; height: 100vh; overflow: hidden; background: #e6e6e6; }
    .main { flex: 1; min-height: 0; display: flex; margin-top: 3px; }
    .chart { flex: 1; margin: 0 4px; }
    .fixed { flex: none; }
  `;
  render() {
    return html`
      <browser-chrome class="fixed"></browser-chrome>
      <top-toolbar class="fixed"></top-toolbar>
      <div class="main">
        <draw-toolbar class="fixed"></draw-toolbar>
        <price-chart class="chart"></price-chart>
        <watch-list class="fixed"></watch-list>
        <side-rail class="fixed"></side-rail>
      </div>
      <task-bar class="fixed"></task-bar>`;
  }
}
